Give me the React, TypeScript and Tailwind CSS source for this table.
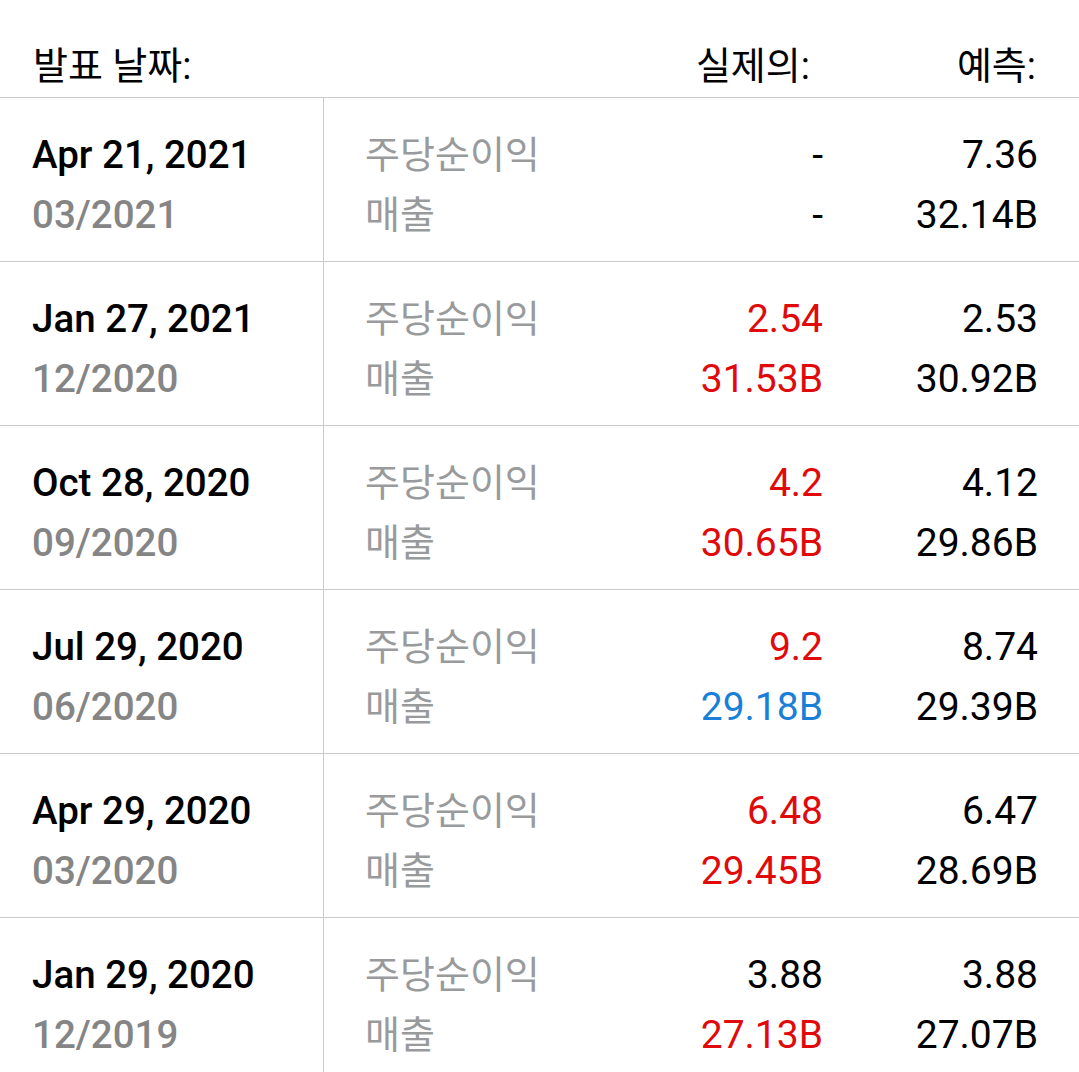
type Row = {
  date: string;
  period: string;
  epsActual: string;
  epsColor: string;
  revActual: string;
  revColor: string;
  epsForecast: string;
  revForecast: string;
};

const RED = "text-[#e00a0a]";
const BLUE = "text-[#1a7fd6]";
const BLACK = "text-black";

const rows: Row[] = [
  { date: "Apr 21, 2021", period: "03/2021", epsActual: "-", epsColor: BLACK, revActual: "-", revColor: BLACK, epsForecast: "7.36", revForecast: "32.14B" },
  { date: "Jan 27, 2021", period: "12/2020", epsActual: "2.54", epsColor: RED, revActual: "31.53B", revColor: RED, epsForecast: "2.53", revForecast: "30.92B" },
  { date: "Oct 28, 2020", period: "09/2020", epsActual: "4.2", epsColor: RED, revActual: "30.65B", revColor: RED, epsForecast: "4.12", revForecast: "29.86B" },
  { date: "Jul 29, 2020", period: "06/2020", epsActual: "9.2", epsColor: RED, revActual: "29.18B", revColor: BLUE, epsForecast: "8.74", revForecast: "29.39B" },
  { date: "Apr 29, 2020", period: "03/2020", epsActual: "6.48", epsColor: RED, revActual: "29.45B", revColor: RED, epsForecast: "6.47", revForecast: "28.69B" },
  { date: "Jan 29, 2020", period: "12/2019", epsActual: "3.88", epsColor: BLACK, revActual: "27.13B", revColor: RED, epsForecast: "3.88", revForecast: "27.07B" },
];

const ko = "text-[38px]";

export default function App() {
  return (
    <div className="w-[1079px] h-[1072px] overflow-hidden bg-white font-['Roboto','Noto_Sans_CJK_KR',sans-serif] text-[39px] leading-[60px]">
      <div className="flex items-start h-[98px] pl-[33px] pr-[43px] pt-[36px] border-b border-[#cacaca] text-black">
        <div className={`flex-1 ${ko}`}>발표 날짜:</div>
        <div className={ko}>실제의:</div>
        <div className={`w-[226px] text-right ${ko}`}>예측:</div>
      </div>
      {rows.map((r) => (
        <div key={r.date} className="flex h-[164px] border-b border-[#cacaca]">
          <div className="w-[324px] shrink-0 border-r border-[#cacaca] pl-[32px] pt-[27px] text-[38.5px] font-medium">
            <div className="text-black">{r.date}</div>
            <div className="text-[#858585]">{r.period}</div>
          </div>
          <div className="flex flex-1 pl-[41px] pr-[41px] pt-[27px]">
            <div className={`w-[200px] text-[#999a9c] ${ko}`}>
              <div>주당순이익</div>
              <div>매출</div>
            </div>
            <div className="flex-1 text-right">
              <div className={r.epsColor}>{r.epsActual}</div>
              <div className={r.revColor}>{r.revActual}</div>
            </div>
            <div className="w-[215px] text-right text-black">
              <div>{r.epsForecast}</div>
              <div>{r.revForecast}</div>
            </div>
          </div>
        </div>
      ))}
    </div>
  );
}
